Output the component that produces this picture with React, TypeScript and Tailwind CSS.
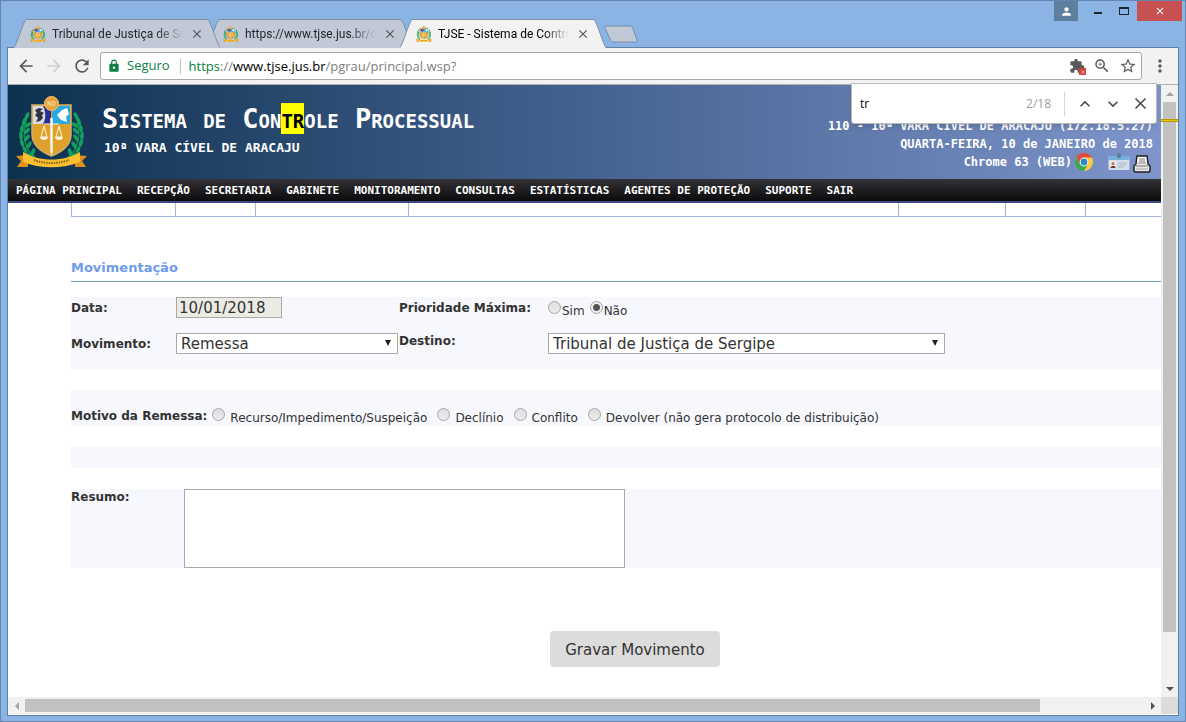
import { useState } from 'react';
import type { ReactNode } from 'react';
import { MdArrowBack, MdArrowForward, MdClose, MdExtension, MdKeyboardArrowDown, MdKeyboardArrowUp, MdLock, MdMoreVert, MdPerson, MdRefresh, MdStarBorder, MdZoomIn } from 'react-icons/md';

const tabs = [
    { title: 'Tribunal de Justiça de Se', active: false, layer: 'z-20' },
    { title: 'https://www.tjse.jus.br/co', active: false, layer: 'z-10' },
    { title: 'TJSE - Sistema de Contro', active: true, layer: 'z-30' },
];

const menu = ['PÁGINA PRINCIPAL', 'RECEPÇÃO', 'SECRETARIA', 'GABINETE', 'MONITORAMENTO', 'CONSULTAS', 'ESTATÍSTICAS', 'AGENTES DE PROTEÇÃO', 'SUPORTE', 'SAIR'];

const motivos = ['Recurso/Impedimento/Suspeição', 'Declínio', 'Conflito', 'Devolver (não gera protocolo de distribuição)'];

const leaves = [
    [14, 60, -20], [9, 54, 0], [6, 47, 10], [5, 40, 20], [6, 33, 30], [8, 26, 40], [11, 20, 50],
    [17, 56, 40], [13, 49, 55], [11, 42, 60], [11, 35, 70], [12, 29, 80],
];

function Crest({ className }: { className: string }) {
    return (
        <svg viewBox="0 0 72 72" className={className} aria-hidden="true">
            {[false, true].map((flip) => (
                <g key={String(flip)} transform={flip ? 'translate(71 0) scale(-1 1)' : undefined} fill="#12a05c">
                    <path d="M20 62C8 54 5 38 12 18" fill="none" stroke="#0f8a4e" strokeWidth="1.5" />
                    {leaves.map(([x, y, r]) => (
                        <ellipse key={`${x}-${y}`} cx={x} cy={y} rx="1.8" ry="4" transform={`rotate(${r - 25} ${x} ${y})`} />
                    ))}
                </g>
            ))}
            <path d="M16 9h39v29c0 12-9 18-19.500 22-10-4-19.500-10-19.500-22z" fill="#dfa02c" stroke="#d3b06a" strokeWidth="1.5" />
            <path d="M17 10h18v18H17z" fill="#d8dbe2" />
            <path d="M27 10h8v18h-8c3-5 3-12 0-18z" fill="#2c2f8f" />
            <path d="M19 14l4-2 4 1-3 2 4 2-2 2 1 3-3 3-4 1 2-4-3-3 2-2z" fill="#33343d" />
            <path d="M36 10h18v18H36z" fill="#28a9df" />
            <path d="M41 19l5-5 5-2 2 6-3 3 1 5-6-2z" fill="#fff" />
            <path d="M34.500 22h2v34l-1 3-1-3z" fill="#fff" stroke="#f2ead2" strokeWidth=".5" />
            <path d="M28 28h15M28 30l-3 11h6zM43 30l-3 11h6z" fill="none" stroke="#fff6dc" strokeWidth="1" />
            <path d="M24 41h8c0 4-8 4-8 0zM39 41h8c0 4-8 4-8 0z" fill="#fff6dc" />
            <circle cx="35.500" cy="7.500" r="7" fill="#e8a33c" stroke="#f6c673" strokeWidth="1" />
            <path d="M32 10V5l3 5V5M37 5c3 0 3 5 0 5z" fill="none" stroke="#fbe3b4" strokeWidth=".8" />
            <path d="M0 60l12-1v12H1l4-6zM71 60l-12-1v12h11l-4-6z" fill="#dd8f1d" />
            <path d="M7 56c16 10 41 10 57 0v10c-17 7-40 7-57 0z" fill="#fcbf2d" />
            <path d="M18 64c11 4 24 4 35 0" fill="none" stroke="#8a6218" strokeWidth="2" strokeDasharray="1.500 1" />
        </svg>
    );
}

function Tab({ title, active, layer }: { title: string; active: boolean; layer: string }) {
    const fill = active ? '#f2f2f2' : '#c1c9d6';
    return (
        <div role="tab" aria-selected={active} className={`relative -ml-[13px] flex h-[29px] w-[206px] ${layer}`}>
            <svg viewBox="0 0 14 29" className="h-full w-[14px] shrink-0" aria-hidden="true">
                <path d="M0 29C3 25 9 3 12 .5H14V29z" fill={fill} />
                <path d="M0 28.5C3 25 9 3 12 .5H14" fill="none" stroke="#7b8da6" />
            </svg>
            <div className={`flex min-w-0 flex-1 items-center border-t border-[#7b8da6] ${active ? 'bg-[#f2f2f2] text-black' : 'bg-[#c1c9d6] text-[#22262e]'}`}>
                <Crest className="ml-[2px] h-4 w-4 shrink-0" />
                <span className="ml-[6px] w-[131px] shrink-0 font-[Roboto,sans-serif] text-[12px] whitespace-nowrap [mask-image:linear-gradient(to_right,black_80%,transparent)]">{title}</span>
                <button type="button" aria-label="Fechar guia" className="ml-[7px] shrink-0 text-[#505459]">
                    <MdClose className="h-[14px] w-[14px]" />
                </button>
            </div>
            <svg viewBox="0 0 14 29" className="h-full w-[14px] shrink-0" aria-hidden="true">
                <path d="M0 .5H2C5 3 11 25 14 29H0z" fill={fill} />
                <path d="M0 .5H2C5 3 11 25 14 28.5" fill="none" stroke="#7b8da6" />
            </svg>
        </div>
    );
}

function TitleBar() {
    return (
        <div className="flex h-[46px] items-start justify-between">
            <div role="tablist" className="mt-[18px] flex pl-5">
                {tabs.map((tab) => <Tab key={tab.title} {...tab} />)}
                <button type="button" aria-label="Nova guia" className="-ml-[2px] mt-[6px] h-[18px]">
                    <svg viewBox="0 0 34 18" className="h-[18px] w-[34px]" aria-hidden="true">
                        <path d="M2 1h24c2 0 2 1 3 3l4 11c1 2 0 2-1 2H9c-2 0-2-1-3-3L1 3C0 1 1 1 2 1z" fill="#c1c9d6" stroke="#7b8da6" />
                    </svg>
                </button>
            </div>
            <div className="-mr-[3px] flex h-5">
                <button type="button" aria-label="Perfil" className="flex w-6 items-center justify-center bg-[#5f7f9f] text-white">
                    <MdPerson className="h-[13px] w-[13px]" />
                </button>
                <button type="button" aria-label="Minimizar" className="ml-[6px] flex w-[27px] items-center justify-center pt-1">
                    <span className="h-[2px] w-2 bg-[#1c2430]" />
                </button>
                <button type="button" aria-label="Maximizar" className="flex w-[26px] items-center justify-center">
                    <span className="h-2 w-[10px] border border-t-2 border-[#1c2430]" />
                </button>
                <button type="button" aria-label="Fechar" className="flex w-[45px] items-center justify-center bg-[#c75050] text-white">
                    <MdClose className="h-3 w-3" />
                </button>
            </div>
        </div>
    );
}

function Toolbar() {
    return (
        <div className="flex h-[37px] shrink-0 items-center border-b border-[#b0b0b0] bg-[#f2f2f2] text-[#5a5a5a]">
            <div className="flex items-center gap-2 pr-2 pl-2">
                <button type="button" aria-label="Voltar"><MdArrowBack className="h-5 w-5" /></button>
                <button type="button" aria-label="Avançar" className="text-[#cfcfcf]"><MdArrowForward className="h-5 w-5" /></button>
                <button type="button" aria-label="Recarregar"><MdRefresh className="h-5 w-5" /></button>
            </div>
            <div className="flex h-7 flex-1 items-center rounded-[3px] border border-[#a9a9a9] bg-white px-1 text-[13px]">
                <MdLock className="ml-[2px] h-[14px] w-[14px] text-[#0b8043]" />
                <span className="ml-[6px] text-[#0b8043]">Seguro</span>
                <span className="mr-2 ml-[10px] h-4 w-px bg-[#c0c0c0]" />
                <div role="textbox" aria-label="Endereço" contentEditable suppressContentEditableWarning className="flex-1 pt-px whitespace-nowrap text-[#808080] outline-none">
                    <span className="text-[#0b8043]">https</span>://<span className="text-black">www.tjse.jus.br</span>/pgrau/principal.wsp?
                </div>
                <button type="button" aria-label="Plug-in bloqueado" className="relative">
                    <MdExtension className="h-4 w-4" />
                    <span className="absolute -right-px -bottom-px flex h-[7px] w-[7px] items-center justify-center bg-[#d8403a] text-white">
                        <MdClose className="h-[6px] w-[6px]" />
                    </span>
                </button>
                <button type="button" aria-label="Zoom" className="ml-2"><MdZoomIn className="h-[18px] w-[18px]" /></button>
                <button type="button" aria-label="Favoritos" className="ml-2"><MdStarBorder className="h-[18px] w-[18px]" /></button>
            </div>
            <button type="button" aria-label="Menu" className="mr-2 ml-2"><MdMoreVert className="h-5 w-5" /></button>
        </div>
    );
}

function FindBar() {
    const [query, setQuery] = useState('tr');
    return (
        <div className="absolute -top-[2px] right-[21px] z-40 flex h-[41px] w-[306px] items-center rounded-b-[3px] border border-[#b9b9b9] bg-white pr-[6px] pl-2 text-[12px] text-[#4a4a4a] shadow-md">
            <input aria-label="Localizar" value={query} onChange={(e) => setQuery(e.target.value)} className="min-w-0 flex-1 text-black outline-none" />
            <span className="text-[#a0a0a0]">2/18</span>
            <span className="ml-[13px] h-6 w-px bg-[#d5d5d5]" />
            <button type="button" aria-label="Anterior" className="ml-[10px]"><MdKeyboardArrowUp className="h-5 w-5" /></button>
            <button type="button" aria-label="Próximo" className="ml-2"><MdKeyboardArrowDown className="h-5 w-5" /></button>
            <button type="button" aria-label="Fechar busca" className="ml-2"><MdClose className="h-[19px] w-[19px]" /></button>
        </div>
    );
}

function ChromeLogo() {
    return (
        <svg viewBox="0 0 18 18" className="h-[18px] w-[18px]" aria-hidden="true">
            <circle cx="9" cy="9" r="9" fill="#fccc3c" />
            <path d="M1.2 4.5A9 9 0 0 1 16.8 4.5H9L5.1 11.2z" fill="#df4a3e" />
            <path d="M1.2 4.5A9 9 0 0 0 9 18L12.9 11.2H5.1z" fill="#3aa757" />
            <circle cx="9" cy="9" r="4.4" fill="#fff" />
            <circle cx="9" cy="9" r="3.4" fill="#2a8bbf" />
        </svg>
    );
}

function BadgeIcon() {
    return (
        <svg viewBox="0 0 22 18" className="h-[18px] w-[22px]" aria-hidden="true">
            <rect x=".5" y="3" width="21" height="14" rx="1" fill="#d3dfeb" />
            <path d="M.5 3h21v4H.5z" fill="#77aee0" />
            <rect x="9" y="0" width="4" height="5" rx="1" fill="#5b7f99" />
            <rect x="2" y="8" width="6" height="7" fill="#f4efe8" />
            <circle cx="5" cy="10.5" r="1.6" fill="#b9745a" />
            <path d="M2.5 15c0-3 5-3 5 0z" fill="#6b3a2c" />
            <path d="M10 10h9M10 12h9M10 14h6" stroke="#b3bbc4" />
        </svg>
    );
}

function PrinterIcon() {
    return (
        <svg viewBox="0 0 18 18" className="h-[18px] w-[18px]" aria-hidden="true">
            <path d="M4 1h10l1 8 2 2v5l-1 1H2l-1-1v-5l2-2z" fill="#e6e6e6" stroke="#222" strokeWidth="1.5" />
            <path d="M5 2h8l1 7H4z" fill="#fff" />
            <path d="M6 4h6M6 6h6M5 8h8" stroke="#777" />
            <path d="M3 11h12" stroke="#777" />
            <path d="M3 14h12" stroke="#aaa" />
        </svg>
    );
}

function SystemHeader() {
    return (
        <header className="font-['DejaVu_Sans_Mono','Liberation_Mono',monospace] font-bold text-white">
            <div className="flex h-[94px] bg-linear-to-r from-[#0c3150] via-[#44628f] to-[#7e95cb] px-2 whitespace-nowrap">
                <Crest className="mt-[11px] h-[72px] w-[72px] shrink-0" />
                <div className="mt-[18px] ml-[14px] flex-1">
                    <h1 className="text-[27px] leading-8 [font-variant-caps:small-caps]">
                        Sistema de Con<mark className="bg-[#ffff00] text-black">tr</mark>ole Processual
                    </h1>
                    <p className="ml-[2px] text-[13px] leading-[26px]">10ª VARA CÍVEL DE ARACAJU</p>
                </div>
                <div className="mt-8 text-right text-[12px] leading-[18px]">
                    <p>110 - 10ª VARA CÍVEL DE ARACAJU (172.18.5.27)</p>
                    <p>QUARTA-FEIRA, 10 de JANEIRO de 2018</p>
                    <div className="mr-[2px] flex items-start justify-end">
                        <span className="mr-[3px]">Chrome 63 (WEB)</span>
                        <ChromeLogo />
                        <button type="button" aria-label="Crachá" className="ml-[15px]"><BadgeIcon /></button>
                        <button type="button" aria-label="Imprimir" className="mt-[2px] ml-[3px]"><PrinterIcon /></button>
                    </div>
                </div>
            </div>
            <nav className="flex h-6 items-center border-b-2 border-[#3b4a80] bg-linear-to-b from-[#333338] to-[#0c0c0e] pt-[2px] pl-px text-[11px] whitespace-nowrap">
                {menu.map((item) => <a key={item} href="#" className="pr-2 pl-[7px]">{item}</a>)}
            </nav>
        </header>
    );
}

const radioStyle = 'h-[13px] w-[13px] shrink-0 appearance-none rounded-full border border-[#a6a6a6] bg-linear-to-b from-[#dedede] to-[#ececec] checked:bg-[radial-gradient(circle,#555_0_3px,#eeeeee_4px)]';

function Radio({ name, label, checked, gap }: { name: string; label: string; checked?: boolean; gap: string }) {
    return (
        <label className={`flex items-start ${gap}`}>
            <input type="radio" name={name} defaultChecked={checked} className={radioStyle} />
            <span className="pt-[2px] leading-4">{label}</span>
        </label>
    );
}

function Select({ id, width, children }: { id: string; width: string; children: ReactNode }) {
    return (
        <div className={`relative ${width}`}>
            <select id={id} className="h-[21px] w-full appearance-none border border-[#a9a9a9] bg-white pt-px pl-1 text-[15px] leading-[18px]">
                {children}
            </select>
            <span aria-hidden="true" className="pointer-events-none absolute top-[7px] right-[7px] border-x-[3px] border-t-[6px] border-x-transparent border-t-[#222]" />
        </div>
    );
}

function MovementForm() {
    return (
        <form className="pl-[63px] text-[12px] text-[#333]" onSubmit={(e) => e.preventDefault()}>
            <div className="flex h-[14px] border-b border-l border-[#9fb6d8] *:border-r *:border-[#9fb6d8]">
                <div className="w-[104px]" />
                <div className="w-20" />
                <div className="w-[153px]" />
                <div className="w-[490px]" />
                <div className="w-[107px]" />
                <div className="w-20" />
            </div>

            <h2 className="mt-[42px] border-b border-[#6f9bb8] pb-1 text-[13px] leading-[18px] font-bold text-[#6f9bee]">Movimentação</h2>

            <div className="mt-[15px] grid h-[72px] grid-cols-[105px_223px_149px_1fr] grid-rows-[36px_36px] items-start bg-[#f7f8fe]">
                <label htmlFor="data" className="leading-[22px] font-bold">Data:</label>
                <input id="data" readOnly value="10/01/2018" className="h-[21px] w-[106px] border border-[#a9a9a9] bg-[#ebebe4] px-[2px] pt-px text-[15px]" />
                <span className="leading-[22px] font-bold">Prioridade Máxima:</span>
                <div className="flex gap-[5px] pt-1">
                    <Radio name="prioridade" label="Sim" gap="gap-[1px]" />
                    <Radio name="prioridade" label="Não" gap="gap-[1px]" checked />
                </div>
                <label htmlFor="movimento" className="leading-[22px] font-bold">Movimento:</label>
                <Select id="movimento" width="w-[222px]"><option>Remessa</option></Select>
                <label htmlFor="destino" className="leading-4 font-bold">Destino:</label>
                <Select id="destino" width="w-[397px]"><option>Tribunal de Justiça de Sergipe</option></Select>
            </div>

            <div className="mt-[21px] flex h-9 items-start bg-[#f7f8fe] pt-[18px] whitespace-nowrap">
                <span className="mr-[5px] leading-4 font-bold">Motivo da Remessa:</span>
                <div className="flex gap-[10px]">
                    {motivos.map((motivo) => <Radio key={motivo} name="motivo" label={motivo} gap="gap-[5px]" />)}
                </div>
            </div>

            <div className="mt-[21px] h-[21px] bg-[#f7f8fe]" />

            <div className="mt-[21px] flex bg-[#f7f8fe]">
                <label htmlFor="resumo" className="w-[113px] leading-4 font-bold">Resumo:</label>
                <textarea id="resumo" className="block h-[79px] w-[441px] resize-none border border-[#a9a9a9] bg-white p-1" />
            </div>

            <div className="mt-[63px] -mr-[38px] flex justify-center">
                <button type="submit" className="h-9 rounded-[4px] bg-[#dcdcdc] px-[15px] pt-[2px] text-[15px]">Gravar Movimento</button>
            </div>
        </form>
    );
}

function VerticalScrollbar() {
    return (
        <div className="relative flex w-[17px] shrink-0 flex-col items-center bg-[#f1f1f1]">
            <span className="flex h-[17px] items-center"><span className="border-x-4 border-b-4 border-x-transparent border-b-[#a3a3a3]" /></span>
            <span className="w-[13px] flex-[530] bg-[#c1c1c1]" />
            <span className="flex-[48]" />
            <span className="flex h-[17px] items-center"><span className="border-x-4 border-t-4 border-x-transparent border-t-[#505050]" /></span>
            {/* find-in-page hit */}
            <span className="absolute top-[34px] h-[3px] w-full border-y border-[#b39b00] bg-[#e6c800]" />
        </div>
    );
}

function HorizontalScrollbar() {
    return (
        <div className="mb-px flex h-[17px] shrink-0 bg-[#f1f1f1]">
            <div className="flex flex-1 items-center">
                <span className="flex w-[17px] justify-center"><span className="border-y-4 border-r-4 border-y-transparent border-r-[#a3a3a3]" /></span>
                <span className="h-[13px] flex-[1015] bg-[#c1c1c1]" />
                <span className="flex-[104]" />
                <span className="flex w-[17px] justify-center"><span className="border-y-4 border-l-4 border-y-transparent border-l-[#505050]" /></span>
            </div>
            <span className="w-[17px] bg-[#dcdcdc]" />
        </div>
    );
}

export default function App() {
    return (
        <div className="flex min-h-screen flex-col border border-[#6485b0] bg-[#8ab4e3] px-[6px] pb-[5px] font-['Open_Sans','Noto_Sans',sans-serif]">
            <TitleBar />
            <div className="flex flex-1 flex-col border border-[#5f7fa8] bg-white">
                <Toolbar />
                <div className="relative flex flex-1">
                    <main className="min-w-0 flex-1 overflow-hidden font-['DejaVu_Sans',Verdana,sans-serif]">
                        <SystemHeader />
                        <MovementForm />
                    </main>
                    <VerticalScrollbar />
                    <FindBar />
                </div>
                <HorizontalScrollbar />
            </div>
        </div>
    );
}
